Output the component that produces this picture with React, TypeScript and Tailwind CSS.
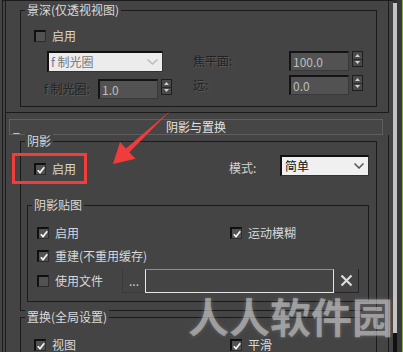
import React from "react";

const Checkbox = ({ checked }: { checked?: boolean }) => (
  <div className="w-[12px] h-[12px] shrink-0 border-t-2 border-l-2 border-t-[#101010] border-l-[#101010] border-r border-b border-r-[#2c2c2c] border-b-[#2c2c2c] bg-[#525252] flex items-center justify-center">
    {checked && (
      <svg width="8" height="8" viewBox="0 0 8 8">
        <path d="M0.8 4.2 L3 6.6 L7.3 1.2" stroke="#f2f2f2" strokeWidth="1.7" fill="none" />
      </svg>
    )}
  </div>
);

const Check = ({ checked, label }: { checked?: boolean; label: string }) => (
  <div className="flex items-center gap-[6px] h-[12px]">
    <Checkbox checked={checked} />
    <span className="leading-[12px] whitespace-nowrap text-[#d8d8d8]">{label}</span>
  </div>
);

const Group = ({
  title,
  className,
  children,
}: {
  title: string;
  className: string;
  children?: React.ReactNode;
}) => (
  <div className={`relative shrink-0 border border-[#1b1b1b] ${className}`}>
    <span className="absolute left-[4px] top-[-8px] px-[2px] bg-[#444] leading-[14px] whitespace-nowrap text-[#dadada]">
      {title}
    </span>
    {children}
  </div>
);

const Spinner = () => (
  <div className="ml-[3px] w-[11px] h-[16px] shrink-0 self-start flex flex-col border border-[#1e1e1e] bg-[#4a4a4a]">
    <div className="flex-1 flex items-center justify-center border-b border-[#2a2a2a]">
      <svg width="5" height="3" viewBox="0 0 5 3">
        <path d="M0 3 L2.5 0 L5 3 Z" fill="#d0d0d0" />
      </svg>
    </div>
    <div className="flex-1 flex items-center justify-center">
      <svg width="5" height="3" viewBox="0 0 5 3">
        <path d="M0 0 L2.5 3 L5 0 Z" fill="#d0d0d0" />
      </svg>
    </div>
  </div>
);

const Field = ({ value }: { value: string }) => (
  <div className="w-[60px] h-[20px] shrink-0 border-t-2 border-l-2 border-t-[#141414] border-l-[#141414] border-r border-b border-r-[#393939] border-b-[#393939] bg-[#525252] pl-[2px] flex items-center text-[#bdbdbd] leading-[14px]">
    {value}
  </div>
);

const Disabled = ({ text, className }: { text: string; className: string }) => (
  <span className={`shrink-0 whitespace-nowrap leading-[14px] text-[#222] [text-shadow:1px_1px_0_#5a5a5a] ${className}`}>
    {text}
  </span>
);

export default function App() {
  return (
    <div className="relative w-[403px] h-[352px] overflow-hidden bg-[#444] flex font-['Noto_Sans_CJK_SC','Noto_Sans',sans-serif] text-[12px] leading-[14px] text-[#d8d8d8]">
      {/* main area */}
      <div className="w-[393px] shrink-0 flex flex-col">
        <div className="h-[3px] bg-[#3c3c3c]" />
        <div className="flex-1 ml-[2px] border-l border-t border-[#1b1b1b] flex">
          <div className="ml-[2px] w-[1px] bg-[#1b1b1b]" />
          <div className="w-[383px] flex flex-col">
            {/* rollout 1 */}
            <div className="h-[112px] shrink-0 border-r border-b border-[#1b1b1b] flex flex-col">
              <Group title="景深(仅透视视图)" className="ml-[14px] mt-[9px] w-[357px] h-[97px]">
                <div className="ml-[13px] mt-[19px]">
                  <Check label="启用" />
                </div>
                <div className="mt-[9px] ml-[23px] flex">
                  <div className="w-[149px] flex flex-col">
                    <div className="ml-[3px] w-[116px] h-[21px] border-t-2 border-l-2 border-t-[#111] border-l-[#111] border-r border-b border-r-[#333] border-b-[#333] bg-[#ececec] flex items-center pl-[2px] pr-[4px]">
                      <span className="flex-1 leading-[14px] text-[#767676]">
                        <span className="text-[#6e73a0]">f</span> 制光圈
                      </span>
                      <svg width="11" height="6" viewBox="0 0 11 6">
                        <path d="M0.5 0.5 L5.5 5 L10.5 0.5" stroke="#bdbdbd" strokeWidth="1.5" fill="none" />
                      </svg>
                    </div>
                    <div className="mt-[7px] flex items-center">
                      <Disabled text="f 制光圈:" className="w-[54px]" />
                      <Field value="1.0" />
                      <Spinner />
                    </div>
                  </div>
                  <div className="flex flex-col">
                    <div className="flex items-center">
                      <Disabled text="焦平面:" className="w-[96px]" />
                      <Field value="100.0" />
                      <Spinner />
                    </div>
                    <div className="mt-[4px] flex items-center">
                      <Disabled text="远:" className="w-[96px]" />
                      <Field value="0.0" />
                      <Spinner />
                    </div>
                  </div>
                </div>
              </Group>
            </div>

            {/* rollout header */}
            <div className="mt-[6px] ml-[3px] w-[374px] h-[16px] shrink-0 border border-[#5e5e5e] bg-[#464646] grid grid-cols-[1fr_auto_1fr] items-center">
              <span className="pl-[3px] leading-[14px] text-[#e0e0e0]">_</span>
              <span className="leading-[14px] text-[#e2e2e2]">阴影与置换</span>
              <span />
            </div>

            {/* rollout 2 */}
            <div className="flex-1 border-r border-[#1b1b1b] flex flex-col">
              <Group title="阴影" className="ml-[14px] mt-[6px] w-[357px] h-[170px] flex flex-col">
                <div className="mt-[13px] flex items-start h-[21px]">
                  <div className="w-[208px] pl-[13px] pt-[8px]">
                    <Check checked label="启用" />
                  </div>
                  <span className="w-[51px] mt-[6px] leading-[14px] text-[#d4d4d4]">模式:</span>
                  <div className="w-[89px] h-[21px] border-t-2 border-l-2 border-t-[#111] border-l-[#111] border-r border-b border-r-[#333] border-b-[#333] bg-[#f0f0f0] flex items-center pl-[3px] pr-[4px]">
                    <span className="flex-1 leading-[14px] text-[#111]">简单</span>
                    <svg width="10" height="6" viewBox="0 0 10 6">
                      <path d="M0.5 0.5 L5 5 L9.5 0.5" stroke="#555" strokeWidth="1.5" fill="none" />
                    </svg>
                  </div>
                </div>
                <Group title="阴影贴图" className="ml-[6px] mt-[29px] w-[342px] h-[97px] flex flex-col">
                  <div className="mt-[21px] flex">
                    <div className="w-[202px] pl-[9px]">
                      <Check checked label="启用" />
                    </div>
                    <Check checked label="运动模糊" />
                  </div>
                  <div className="mt-[11px] pl-[9px]">
                    <Check checked label="重建(不重用缓存)" />
                  </div>
                  <div className="mt-[7px] flex items-center h-[24px]">
                    <div className="w-[94px] pl-[9px]">
                      <Check label="使用文件" />
                    </div>
                    <div className="w-[23px] h-[24px] border-l border-b border-[#3a3a3a] flex items-center justify-center text-[#cfcfcf] leading-[12px]">
                      ...
                    </div>
                    <div className="w-[189px] h-[24px] border border-[#e6e6e6] border-t-[#8e8e8e] bg-[#444]" />
                    <div className="ml-[1px] w-[24px] h-[24px] border-r border-b border-[#252525] flex items-center justify-center">
                      <svg width="13" height="13" viewBox="0 0 13 13">
                        <path d="M1.5 1.5 L11.5 11.5 M11.5 1.5 L1.5 11.5" stroke="#dcdcdc" strokeWidth="2.2" />
                      </svg>
                    </div>
                  </div>
                </Group>
              </Group>

              <Group title="置换(全局设置)" className="ml-[14px] mt-[6px] w-[357px] h-[60px]">
                <div className="mt-[21px] flex">
                  <div className="w-[209px] pl-[13px]">
                    <Check checked label="视图" />
                  </div>
                  <Check checked label="平滑" />
                </div>
              </Group>
            </div>
          </div>
        </div>
      </div>

      {/* scrollbar strip */}
      <div className="w-[4px] shrink-0 flex flex-col">
        <div className="h-[3px] bg-[#2e2e2e]" />
        <div className="h-[330px] bg-[#c4c4c4]" />
        <div className="flex-1 bg-[#111]" />
      </div>
      <div className="w-[5px] shrink-0 bg-[#383838]" />
      <div className="w-[1px] shrink-0 bg-[#86b43e]" />

      {/* red highlight box */}
      <div className="absolute left-[12px] top-[153px] w-[75px] h-[31px] border-[3px] border-[#f23d3d]" />

      {/* red arrow */}
      <svg className="absolute left-0 top-0" width="403" height="352" viewBox="0 0 403 352">
        <polygon
          points="170,111 129.3,152.2 135.5,158.8 113,164 120,142 125.9,148.6"
          fill="#f03c3c"
        />
      </svg>

      {/* watermark */}
      <div className="absolute left-[188px] top-[293px] font-['Noto_Sans_CJK_SC',sans-serif] font-bold text-[41px] leading-[44px] tracking-[0px] text-[rgba(205,205,205,0.62)] [text-shadow:0_0_4px_rgba(255,255,255,0.18)] whitespace-nowrap">
        人人软件园
      </div>
    </div>
  );
}
